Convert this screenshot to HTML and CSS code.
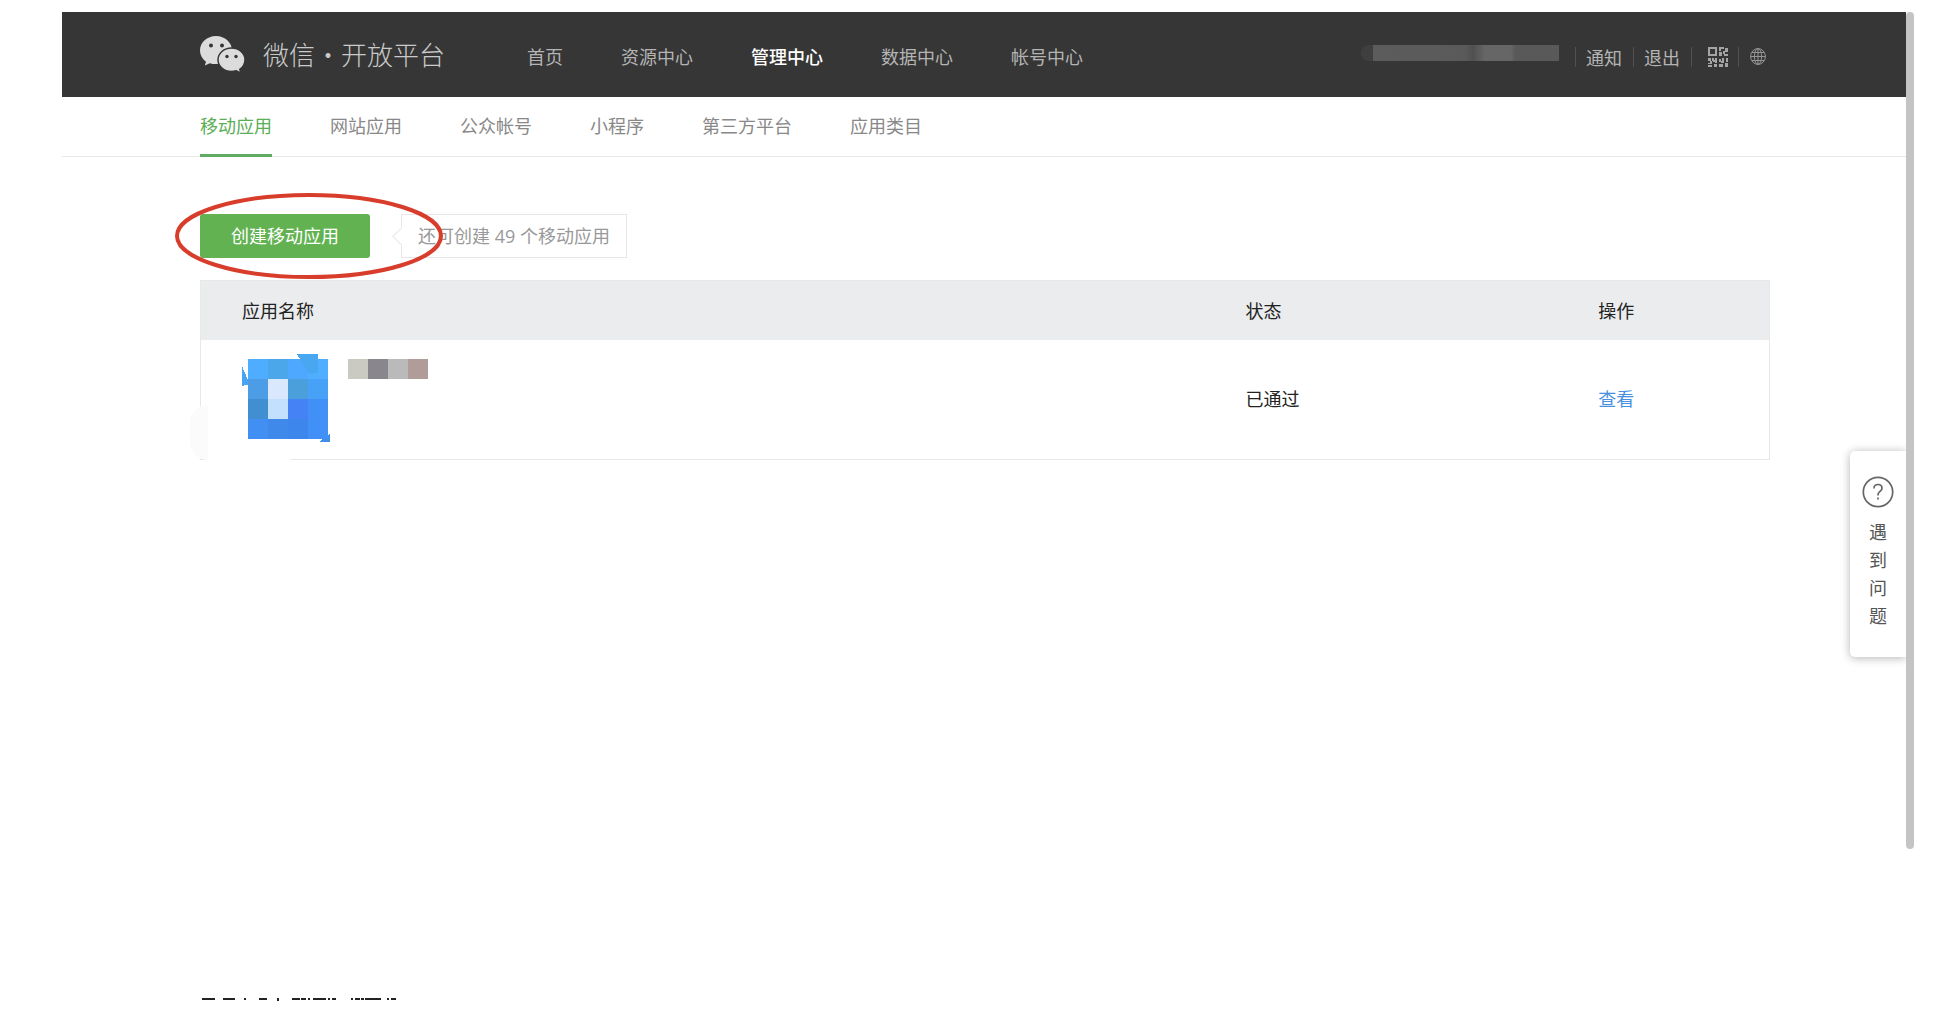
FILE: index.html
```html
<!DOCTYPE html>
<html lang="zh-CN">
<head>
<meta charset="utf-8">
<title>微信·开放平台</title>
<link rel="stylesheet" href="styles.css">
</head>
<body>
<div class="frame">
  <div class="app">
    <header class="topbar">
      <a class="brand" href="#">
        <svg class="brand-logo" viewBox="0 0 46 37" aria-hidden="true">
          <path fill="#dcdcdc" d="M16 0C7 0 0 6.400 0 14.500c0 4.600 2.300 8.500 6 11.200L4.800 29.500l5-2.300c2 .6 4 .9 6.200.9 9 0 16-6.100 16-13.800S25 0 16 0z"/>
          <path fill="#dcdcdc" stroke="#363636" stroke-width="1.500" d="M31.500 12C24 12 18 17.300 18 23.800s6 11.700 13.500 11.700c1.700 0 3.300-.3 4.800-.7l4.700 2.400-1.200-3.800c3.200-2.200 5.200-5.600 5.200-9.600C45 17.300 39 12 31.500 12z"/>
          <g fill="#363636"><circle cx="11" cy="9.500" r="2"/><circle cx="22" cy="9.500" r="2"/><circle cx="27" cy="20.500" r="1.700"/><circle cx="36" cy="20.500" r="1.700"/></g>
        </svg>
        <span class="brand-name">微信·开放平台</span>
      </a>
      <nav class="main-nav">
        <a href="#">首页</a>
        <a href="#">资源中心</a>
        <a class="current" href="#">管理中心</a>
        <a href="#">数据中心</a>
        <a href="#">帐号中心</a>
      </nav>
      <div class="account">
        <span class="account-name"></span>
        <a href="#">通知</a>
        <a href="#">退出</a>
        <a class="qr" href="#" aria-label="二维码">
          <svg width="20" height="20" viewBox="0 0 20 20" fill="#a4a4a4" aria-hidden="true">
            <path fill-rule="evenodd" d="M0 0h9v9H0zM2 2v5h5V2z"/>
            <path d="M11 0h5v2h-3v2h-2zM17 1h3v4h-3v2h-2V4h2zM11 5h3v4h-3zM16 7h4v2h-4zM0 11h3v3H0zM4 11h2v3H4zM7 11h2v5H7v-1H5v-2h2zM2 14h2v3H0v-1h2zM0 18h4v2H0zM6 17h3v3H6zM11 12h2v3h-2zM14 11h2v3h-2zM18 11h2v4h-2zM13 14h3v2h-3zM11 17h4v3h-4zM17 16h3v4h-3z"/>
          </svg>
        </a>
        <a class="lang" href="#" aria-label="语言">
          <svg width="16" height="17" viewBox="0 0 16 17" fill="none" stroke="#969696" aria-hidden="true">
            <ellipse cx="8" cy="8.500" rx="7.400" ry="7.900"/>
            <ellipse cx="8" cy="8.500" rx="3.600" ry="7.900"/>
            <path d="M8 .5v16M.5 8.500h15M2 4.500h12M2 12.500h12"/>
          </svg>
        </a>
      </div>
    </header>

    <nav class="sub-nav">
      <a class="current" href="#">移动应用</a>
      <a href="#">网站应用</a>
      <a href="#">公众帐号</a>
      <a href="#">小程序</a>
      <a href="#">第三方平台</a>
      <a href="#">应用类目</a>
    </nav>

    <main class="content">
      <div class="toolbar">
        <button class="create" type="button">创建移动应用</button>
        <p class="quota">还可创建 49 个移动应用</p>
        <svg class="marker" viewBox="0 0 270 86" aria-hidden="true"><ellipse cx="134" cy="43" rx="132" ry="41" fill="none" stroke="#d83c2a" stroke-width="4"/></svg>
      </div>
      <div class="list">
        <table class="apps">
          <thead>
            <tr><th class="col-name">应用名称</th><th class="col-status">状态</th><th>操作</th></tr>
          </thead>
          <tbody>
            <tr>
              <td>
                <div class="app-cell">
                  <svg class="app-icon" width="88" height="90" viewBox="0 0 88 90" shape-rendering="crispEdges" aria-hidden="true">
                    <path fill="#49a4f6" d="M0 13l6 14 3 4-9 2z"/>
                    <path fill="#3f8fe9" d="M88 81v8H77l8-6z"/>
                    <path fill="#4fadff" d="M6 6h20v20H6z"/><path fill="#4ba6ea" d="M26 6h20v20H26z"/><path fill="#4ea8ff" d="M46 6h20v20H46z"/><path fill="#4faeff" d="M66 6h20v20H66z"/>
                    <path fill="#4d9ce6" d="M6 26h20v20H6z"/><path fill="#d9e8fd" d="M26 26h20v20H26z"/><path fill="#4b9fdb" d="M46 26h20v20H46z"/><path fill="#47a1f7" d="M66 26h20v20H66z"/>
                    <path fill="#418fd1" d="M6 46h20v20H6z"/><path fill="#c3e1ff" d="M26 46h20v20H26z"/><path fill="#4482f5" d="M46 46h20v20H46z"/><path fill="#4090f7" d="M66 46h20v20H66z"/>
                    <path fill="#418ff2" d="M6 66h20v20H6z"/><path fill="#3e89e9" d="M26 66h20v20H26z"/><path fill="#3c86ec" d="M46 66h20v20H46z"/><path fill="#4090f8" d="M66 66h20v20H66z"/>
                    <path fill="#49a6f1" d="M55 1h21v19l-9 1z"/>
                  </svg>
                  <span class="app-name"><i></i><i></i><i></i><i></i></span>
                </div>
              </td>
              <td>已通过</td>
              <td><a class="view" href="#">查看</a></td>
            </tr>
          </tbody>
        </table>
        <span class="smudge"></span>
      </div>
    </main>

    <aside class="help">
      <svg width="32" height="32" viewBox="0 0 32 32" fill="none" stroke="#666" stroke-width="1.700" aria-hidden="true">
        <circle cx="16" cy="16" r="14.700"/>
        <path d="M12 12.500c0-2.400 1.700-4 4-4s4 1.500 4 3.700c0 3-4 3.300-4 6.300v1"/>
        <path d="M16 21.500v2"/>
      </svg>
      <span>遇</span><span>到</span><span>问</span><span>题</span>
    </aside>
  </div>
  <div class="scrollbar"></div>
</div>
<footer class="cut-line">
  <svg width="200" height="3" viewBox="0 0 200 3" fill="#222" aria-hidden="true">
    <path d="M0 0h13v2H0zM21 0h12v2H21zM42 0h2v2h-2zM57 0h8v2h-8zM75 0h2v3h-2zM90 0h8v2h-8zM99 0h5v2h-5zM106 0h2v2h-2zM111 0h13v2h-13zM126 0h2v2h-2zM130 0h4v2h-4zM149 0h2v2h-2zM153 0h5v2h-5zM159 0h3v2h-3zM163 0h16v2h-16zM185 0h2v2h-2zM189 0h5v2h-5z"/>
  </svg>
</footer>
</body>
</html>
```
FILE: styles.css
```css
* {
  box-sizing: border-box;
}

body {
  margin: 0;
  min-height: 100vh;
  display: flex;
  flex-direction: column;
  justify-content: space-between;
  padding: 12px 38px 11px 62px;
  background: #fff;
  color: #222;
  font: 18px/28px "Noto Sans CJK SC", sans-serif;
}

a {
  color: inherit;
  text-decoration: none;
}

.frame {
  display: flex;
  min-height: calc(100vh - 175px);
}

.app {
  position: relative;
  flex: 1;
  overflow: hidden;
}

.scrollbar {
  width: 8px;
  border-radius: 4px;
  background: #c4c4c4;
}

.topbar {
  display: flex;
  align-items: center;
  height: 85px;
  padding: 0 140px 0 138px;
  background: #363636;
  color: #b4b4b4;
}

.brand {
  display: flex;
  align-items: center;
  gap: 17px;
  color: #cacaca;
}

.brand-logo {
  width: 46px;
  height: 37px;
}

.brand-name {
  padding-bottom: 2px;
  font-size: 26px;
  font-weight: 300;
  white-space: nowrap;
}

.main-nav {
  display: flex;
  gap: 58px;
  margin-left: 82px;
  padding-top: 2px;
  white-space: nowrap;
}

.main-nav .current {
  color: #fff;
  font-weight: 500;
}

.account {
  display: flex;
  align-items: center;
  margin-left: auto;
  padding-top: 4px;
  white-space: nowrap;
}

.account-name {
  width: 198px;
  height: 16px;
  margin: 0 16px 8px 0;
  border-radius: 8px 0 0 8px;
  background: linear-gradient(90deg, #3f3f3f 12px, #5c5c5c 12px, #5a5a5a 104px, #505050 112px, #666 124px, #666 150px, #595959 154px);
}

.account a {
  display: flex;
  align-items: center;
  height: 20px;
  padding: 0 11px 0 10px;
  border-left: 1px solid #505050;
  line-height: 18px;
}

.account .qr {
  padding: 0 10px 0 16px;
}

.account .lang {
  padding: 0 0 0 11px;
}

.sub-nav {
  display: flex;
  gap: 58px;
  height: 60px;
  padding: 0 138px;
  border-bottom: 1px solid #e8e8e8;
  color: #888;
  line-height: 57px;
  white-space: nowrap;
}

.sub-nav .current {
  margin-bottom: -1px;
  color: #5aae54;
  border-bottom: 3px solid #5fab63;
}

.content {
  padding: 57px 136px 0 138px;
}

.toolbar {
  position: relative;
  display: flex;
  gap: 31px;
}

.create {
  width: 170px;
  height: 44px;
  padding: 0 0 2px;
  border: 0;
  border-radius: 3px;
  background: #62b252;
  color: #fff;
  font: inherit;
}

.quota {
  position: relative;
  margin: 0;
  padding: 7px 16px;
  border: 1px solid #e7e7e7;
  color: #999;
  font-family: "Open Sans", "Noto Sans CJK SC", sans-serif;
}

.quota::before {
  content: "";
  position: absolute;
  top: 15px;
  left: -7px;
  width: 12px;
  height: 12px;
  border: solid #e7e7e7;
  border-width: 0 0 1px 1px;
  background: #fff;
  transform: rotate(45deg);
}

.marker {
  position: absolute;
  top: -21px;
  left: -25px;
  width: 270px;
  height: 86px;
}

.list {
  position: relative;
  margin-top: 22px;
}

.apps {
  width: 100%;
  table-layout: fixed;
  border-collapse: separate;
  border-spacing: 0;
  border: 1px solid #e8e8e8;
}

.apps th {
  height: 59px;
  padding: 0 41px 2px;
  background: #ebecee;
  font-weight: 400;
  text-align: left;
}

.apps td {
  height: 119px;
  padding: 0 41px 3px;
}

.col-name {
  width: 64%;
}

.apps .col-status {
  width: 22.5%;
}

.app-cell {
  display: flex;
  align-items: flex-start;
  gap: 18px;
}

.app-name {
  display: flex;
  margin-top: 6px;
}

.app-name i {
  width: 20px;
  height: 20px;
  background: #cacac2;
}

.app-name i:nth-child(2) {
  background: #89878d;
}

.app-name i:nth-child(3) {
  background: #bababb;
}

.app-name i:nth-child(4) {
  background: #b09d99;
}

.view {
  color: #4a90e2;
}

.smudge {
  position: absolute;
  bottom: 0;
  left: -10px;
  width: 100px;
  height: 55px;
  border-radius: 18px 0 0 18px;
  background: linear-gradient(90deg, #fbfbfb 18px, transparent 18px);
}

.smudge::after {
  content: "";
  position: absolute;
  bottom: 0;
  left: 18px;
  right: 0;
  height: 2px;
  background: #fff;
}

.help {
  position: absolute;
  top: 439px;
  right: 0;
  width: 56px;
  display: flex;
  flex-direction: column;
  align-items: center;
  padding: 25px 0 28px;
  border-radius: 5px 0 0 5px;
  background: #fff;
  box-shadow: 0 1px 10px rgba(0, 0, 0, 0.3);
  color: #555;
}

.help svg {
  margin-bottom: 9px;
}

.cut-line {
  display: flex;
  padding-left: 140px;
}
```
